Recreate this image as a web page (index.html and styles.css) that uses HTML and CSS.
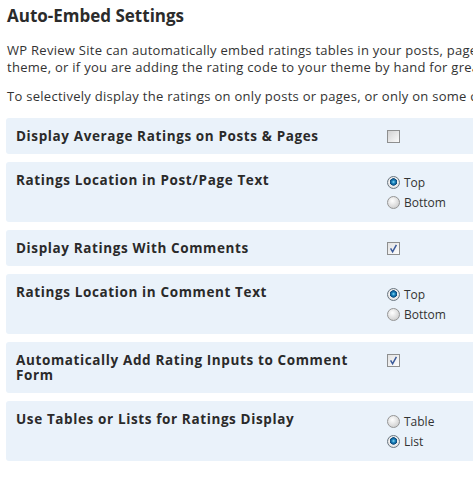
FILE: index.html
```html
<!DOCTYPE html>
<html>
<head>
<meta charset="utf-8">
<link rel="stylesheet" href="styles.css">
</head>
<body>
<div class="page">
  <h2 class="title">Auto-Embed Settings</h2>
  <p class="intro">WP Review Site can automatically embed ratings tables in your posts, pages and comments without you having to edit your<br>theme, or if you are adding the rating code to your theme by hand for greater control you can disable it here.</p>
  <p class="intro second">To selectively display the ratings on only posts or pages, or only on some categories, use the settings below.</p>

  <div class="rows">
    <div class="row">
      <div class="label">Display Average Ratings on Posts &amp; Pages</div>
      <div class="ctrl">
        <span class="cb"></span>
      </div>
    </div>

    <div class="row">
      <div class="label">Ratings Location in Post/Page Text</div>
      <div class="ctrl">
        <div class="opt"><span class="rd on"></span><span>Top</span></div>
        <div class="opt"><span class="rd"></span><span>Bottom</span></div>
      </div>
    </div>

    <div class="row">
      <div class="label">Display Ratings With Comments</div>
      <div class="ctrl">
        <span class="cb checked"><svg viewBox="0 0 13 13" width="13" height="13"><path d="M3.6 6.4 L5.6 9.8 L9.4 2.8" fill="none" stroke="#3a5a9a" stroke-width="1.5"/></svg></span>
      </div>
    </div>

    <div class="row">
      <div class="label">Ratings Location in Comment Text</div>
      <div class="ctrl">
        <div class="opt"><span class="rd on"></span><span>Top</span></div>
        <div class="opt"><span class="rd"></span><span>Bottom</span></div>
      </div>
    </div>

    <div class="row">
      <div class="label">Automatically Add Rating Inputs to Comment Form</div>
      <div class="ctrl">
        <span class="cb checked"><svg viewBox="0 0 13 13" width="13" height="13"><path d="M3.6 6.4 L5.6 9.8 L9.4 2.8" fill="none" stroke="#3a5a9a" stroke-width="1.5"/></svg></span>
      </div>
    </div>

    <div class="row">
      <div class="label">Use Tables or Lists for Ratings Display</div>
      <div class="ctrl">
        <div class="opt"><span class="rd"></span><span>Table</span></div>
        <div class="opt"><span class="rd on"></span><span>List</span></div>
      </div>
    </div>
  </div>
</div>
</body>
</html>
```

FILE: styles.css
```css
html, body {
  margin: 0;
  padding: 0;
  background: #fff;
  overflow: hidden;
}
body {
  font-family: "Open Sans", "DejaVu Sans", sans-serif;
  color: #333;
}
.page {
  width: 900px;
  padding: 4px 0 0 7px;
}
.title {
  font-size: 17px;
  font-weight: bold;
  margin: 0;
  line-height: 24px;
  color: #2b2b2b;
}
.intro {
  font-size: 13px;
  letter-spacing: 0.28px;
  line-height: 17px;
  margin: 14px 0 0 0;
  white-space: nowrap;
  color: #333;
}
.intro.second {
  margin-top: 12px;
}
.rows {
  margin: 13px 0 0 -1px;
  display: flex;
  flex-direction: column;
  gap: 8px;
}
.row {
  display: flex;
  background: #eaf2fa;
  border-radius: 3px;
  padding: 8px 0 7px 10px;
}
.label {
  width: 371px;
  font-size: 13.5px;
  font-weight: bold;
  letter-spacing: 0.62px;
  line-height: 15px;
  padding: 3px 20px 3px 0;
  box-sizing: border-box;
  color: #2a2a2a;
}
.ctrl {
  font-size: 12px;
  padding: 2px 0 3px 0;
  color: #333;
}
.cb {
  display: block;
  width: 13px;
  height: 13px;
  box-sizing: border-box;
  border: 1px solid #8e8f8f;
  background: linear-gradient(135deg, #d2d2d2, #fbfbfb);
  margin-top: 2px;
}
.cb svg { display: block; margin: -1px; }
.cb.checked { background: linear-gradient(135deg, #e2e2e2, #fdfdfd); }
.opt {
  display: flex;
  align-items: center;
  gap: 4px;
  height: 20px;
}
.rd {
  width: 13px;
  height: 13px;
  border-radius: 50%;
  box-sizing: border-box;
  border: 1px solid #959595;
  background: radial-gradient(circle at 40% 35%, #ffffff, #cccccc 85%);
}
.rd.on {
  background: radial-gradient(circle at 50% 45%, #8fdcf5 0, #1a86c0 1.6px, #0d4a7c 3.4px, #f0f0f0 4px, #d0d0d0 100%);
  border-color: #6a7680;
}
```
